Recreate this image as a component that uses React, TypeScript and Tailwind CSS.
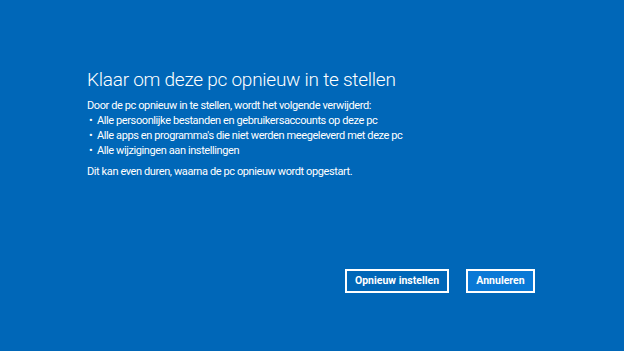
const items = [
  "Alle persoonlijke bestanden en gebruikersaccounts op deze pc",
  "Alle apps en programma's die niet werden meegeleverd met deze pc",
  "Alle wijzigingen aan instellingen",
];

export default function App() {
  return (
    <div
      className="w-[624px] h-[351px] bg-[#0067b8] text-white flex flex-col overflow-hidden"
      style={{ fontFamily: 'Roboto, "Open Sans", sans-serif' }}
    >
      <div className="pl-[87px] pt-[65px]">
        <h1 className="text-[19px] leading-[30px] font-light tracking-[-0.25px]">
          Klaar om deze pc opnieuw in te stellen
        </h1>
        <div className="mt-[3px] text-[11px] leading-[15px] tracking-[-0.4px]">
          <p>Door de pc opnieuw in te stellen, wordt het volgende verwijderd:</p>
          {items.map((t) => (
            <div key={t} className="flex">
              <span className="w-[10px] pl-[2px]">•</span>
              <span>{t}</span>
            </div>
          ))}
          <p className="mt-[6px]">Dit kan even duren, waarna de pc opnieuw wordt opgestart.</p>
        </div>
      </div>
      <div className="flex justify-end gap-[17px] pr-[89px] mt-auto mb-[58px]">
        <button className="w-[104px] h-[24px] border-2 border-white bg-[#0067b8] text-[10.5px] font-bold flex items-center justify-center">
          Opnieuw instellen
        </button>
        <button className="w-[69px] h-[24px] border-2 border-white bg-[#0a79d6] text-[10.5px] font-bold flex items-center justify-center">
          Annuleren
        </button>
      </div>
    </div>
  );
}
